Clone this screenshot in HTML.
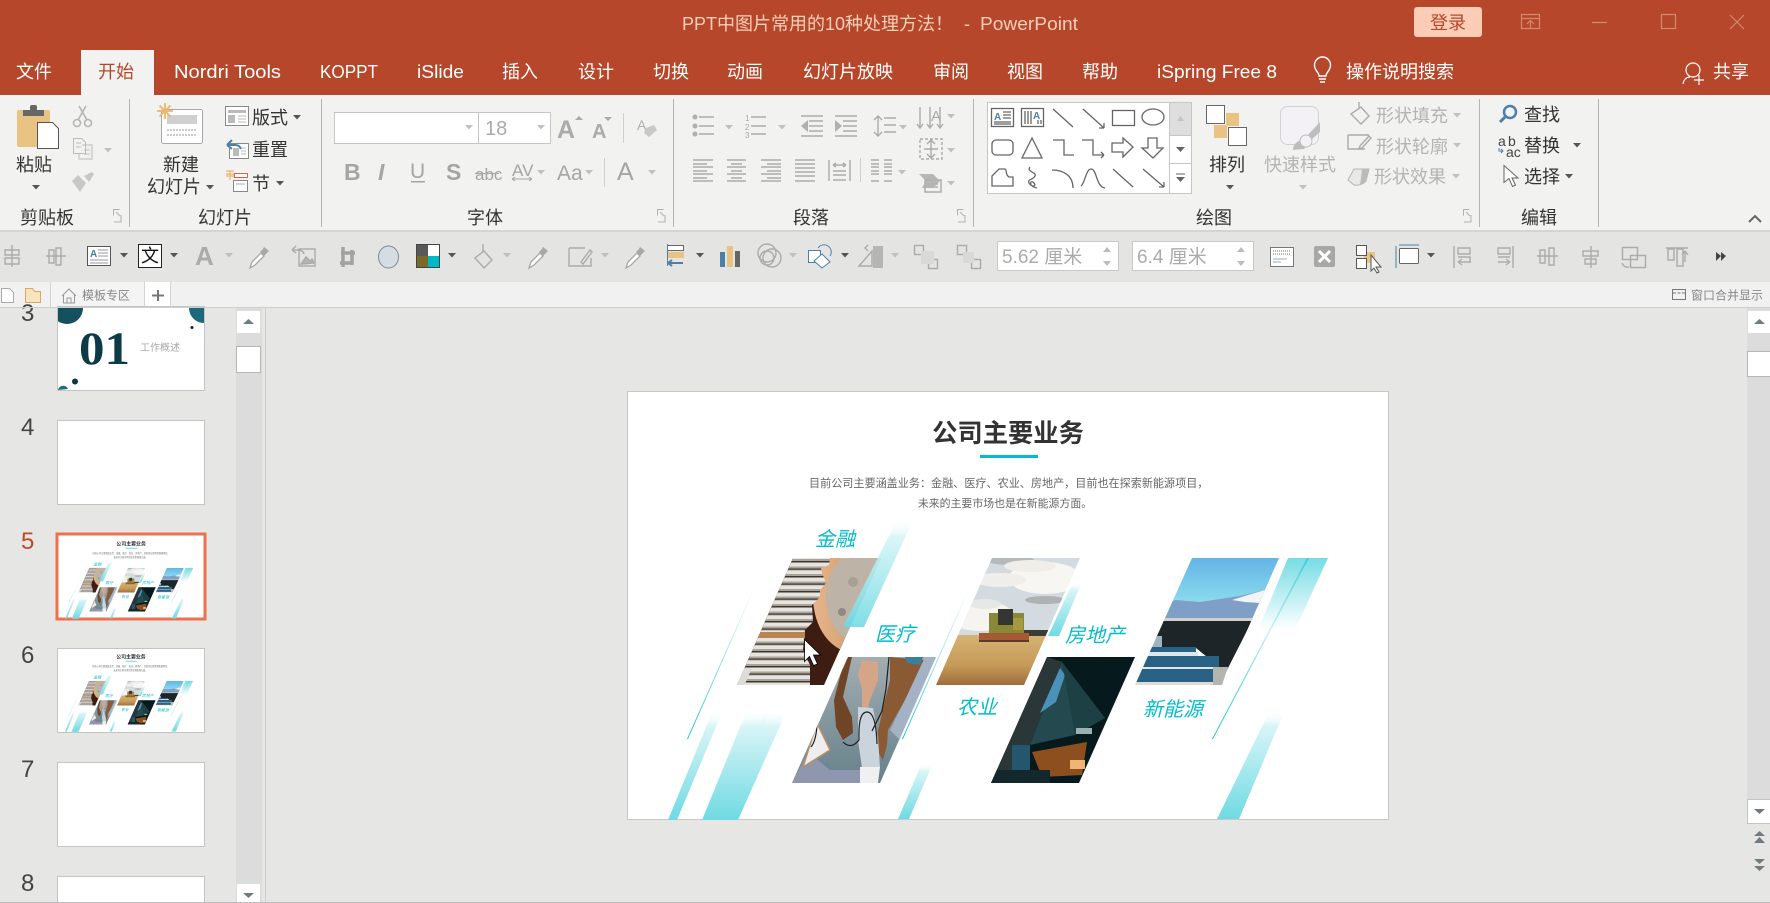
<!DOCTYPE html>
<html lang="zh-CN"><head><meta charset="utf-8"><title>PowerPoint</title>
<style>
html,body{margin:0;padding:0;width:1770px;height:903px;overflow:hidden;background:#e6e6e5}
svg{display:block}
text{font-family:"Liberation Sans","Noto Sans CJK SC",sans-serif}
.t{font-size:18px;fill:#fff}
.r{font-size:18px;fill:#333}
.d{font-size:18px;fill:#b4b4b4}
.g{font-size:18px;fill:#a9a9a9}
.l{font-size:20px;font-style:italic;fill:#05bccb}
.ic{fill:none;stroke:#ababab;stroke-width:1.4}
.dk{fill:none;stroke:#666;stroke-width:1.3}
</style></head><body>
<svg xmlns="http://www.w3.org/2000/svg" width="1770" height="903" viewBox="0 0 1770 903">
<defs>
<polygon id="a" points="-4,-2 4,-2 0,2.5" fill="#555"/>
<polygon id="b" points="-4,-2 4,-2 0,2.5" fill="#c0c0c0"/>
<linearGradient id="gu" x1="0" y1="0" x2="0" y2="1"><stop offset="0" stop-color="#fff" stop-opacity="0"/><stop offset=".15" stop-color="#d8f5f7"/><stop offset="1" stop-color="#6fdae3"/></linearGradient>
<linearGradient id="gd" x1="0" y1="0" x2="0" y2="1"><stop offset="0" stop-color="#76dce4"/><stop offset="1" stop-color="#fff"/></linearGradient>
<linearGradient id="gl" x1="0" y1="0" x2="0" y2="1"><stop offset="0" stop-color="#fff"/><stop offset="1" stop-color="#12bfcd"/></linearGradient>
<linearGradient id="gm" x1="0" y1="0" x2="0" y2="1"><stop offset="0" stop-color="#3fcbd6"/><stop offset=".4" stop-color="#c8f0f3"/><stop offset="1" stop-color="#12bfcd"/></linearGradient>
<linearGradient id="sky" x1="0" y1="0" x2="0" y2="1"><stop offset="0" stop-color="#62b2e5"/><stop offset="1" stop-color="#8fe0ee"/></linearGradient>
<linearGradient id="fld" x1="0" y1="0" x2="0" y2="1"><stop offset="0" stop-color="#d6b373"/><stop offset=".6" stop-color="#c69a58"/><stop offset="1" stop-color="#9d6e3e"/></linearGradient>
<linearGradient id="pl" x1="0" y1="0" x2="1" y2="0"><stop offset="0" stop-color="#e8b48c"/><stop offset="1" stop-color="#b88a50"/></linearGradient>
<linearGradient id="med" x1="0" y1="0" x2="0" y2="1"><stop offset="0" stop-color="#a4aeb2"/><stop offset="1" stop-color="#65808a"/></linearGradient>
<pattern id="coin" width="9" height="7.5" patternUnits="userSpaceOnUse"><rect width="9" height="7.5" fill="#a9a39a"/><rect y=".5" width="9" height="3.5" fill="#e6e4e0"/><rect y="6" width="9" height="1.2" fill="#3f352c"/></pattern>
<clipPath id="c1"><polygon points="793,558 881,558 824,685 737,685"/></clipPath>
<clipPath id="c2"><polygon points="848,657 936,657 880,783 792,783"/></clipPath>
<clipPath id="c3"><polygon points="992,558 1080,558 1024,685 936,685"/></clipPath>
<clipPath id="c4"><polygon points="1047,657 1135,657 1079,783 991,783"/></clipPath>
<clipPath id="c5"><polygon points="1192,558 1279,558 1223,685 1135,685"/></clipPath>
<clipPath id="th3"><rect x="58" y="308" width="146" height="82"/></clipPath>
<g id="dr"><path d="M2 23l2-6 9-9 3 3-9 9z" fill="#fff" stroke="#a8a8a8" stroke-width="1.3"/><path d="M12 7l3-3 1-2 5 4-2 2-3 3z" fill="#a8a8a8"/></g>
<g id="slide">
<g clip-path="url(#c1)"><rect x="735" y="556" width="150" height="130" fill="#3d1c12"/><ellipse cx="855" cy="597" rx="42" ry="56" fill="url(#pl)"/><ellipse cx="862" cy="597" rx="36" ry="47" fill="#bdb4a7"/><circle cx="853" cy="582" r="5" fill="#a8a096"/><circle cx="842" cy="612" r="4" fill="#8f8a85"/><polygon points="737,685 793,558 830,558 829,565 821,568 822,573 826,583 820,590 820,597 812,605 813,622 805,630 803,650 810,665 810,685" fill="url(#coin)"/><polygon points="735,668 752,668 744,686 735,686" fill="#dcdcda"/><rect x="755" y="632" width="50" height="6" fill="#b98552"/><polygon points="874,570 881,570 864,627 843,627 855,612" fill="#5cb8ec" opacity=".55"/></g>
<g clip-path="url(#c2)"><rect x="790" y="655" width="150" height="130" fill="url(#med)"/><polygon points="845,657 834,700 836,727 843,740 853,733 852,717 843,697 852,657" fill="#6f4526"/><polygon points="862,660 878,662 878,680 870,700 868,708 862,708 862,690 858,675" fill="#d4a687"/><polygon points="890,657 925,660 905,700 888,730 887,745 883,760 878,752 877,735 885,700 890,680" fill="#8a5a34"/><polygon points="925,657 936,657 900,740 890,730 905,700" fill="#a3b2c4"/><polygon points="858,707 873,708 878,737 880,768 862,768 858,740" fill="#c9d4dd"/><polygon points="860,767 880,767 878,783 860,783" fill="#f0f0f0"/><polygon points="792,783 860,783 860,770 830,770 808,752" fill="#8e97ad"/><polygon points="817,723 830,750 803,767" fill="#eee" stroke="#b98f68" stroke-width="1.5"/><polygon points="905,657 923,657 920,665 907,663" fill="#3a7f9e"/><path d="M843 742q8 8 16-2q-1-28 8-28 9 0 10 32M889 657l-3 32-4 22-10 20M817 725q-1 16-6 22" fill="none" stroke="#1d1d1d" stroke-width="1.2"/></g>
<g clip-path="url(#c3)"><rect x="930" y="556" width="155" height="80" fill="#d3dbe0"/><ellipse cx="1010" cy="560" rx="24" ry="5" fill="#b4babb"/><ellipse cx="1045" cy="578" rx="36" ry="16" fill="#f7f6f2"/><ellipse cx="1000" cy="580" rx="26" ry="7" fill="#f0eeea"/><ellipse cx="1030" cy="566" rx="26" ry="6" fill="#f0eee8"/><ellipse cx="1045" cy="600" rx="20" ry="4" fill="#aeb2b3"/><ellipse cx="980" cy="616" rx="34" ry="15" fill="#f6f4ee"/><ellipse cx="985" cy="604" rx="16" ry="5" fill="#e6e8e6"/><rect x="930" y="635" width="155" height="50" fill="url(#fld)"/><rect x="1020" y="630" width="40" height="6" fill="#3c3c34"/><rect x="989" y="613" width="35" height="20" fill="#8a8838"/><rect x="1013" y="618" width="10" height="12" fill="#a69a40"/><rect x="998" y="609" width="15" height="16" fill="#353631"/><rect x="979" y="633" width="50" height="7" fill="#a45a32"/><rect x="979" y="640" width="50" height="2" fill="#5a3a28"/></g>
<g clip-path="url(#c4)"><rect x="990" y="655" width="150" height="130" fill="#06191d"/><polygon points="1047,657 1062,662 1030,745 1015,780 991,783" fill="#2b3638"/><polygon points="1062,662 1030,745 1075,735 1105,718" fill="#24494e"/><polygon points="1060,668 1040,713 1056,702 1065,675" fill="#4a92b8"/><polygon points="1062,662 1105,718 1075,735" fill="#1c4044"/><polygon points="1032,752 1087,742 1082,775 1042,777" fill="#8d4f1d"/><rect x="1070" y="760" width="15" height="9" fill="#eeb574"/><rect x="1012" y="745" width="18" height="26" fill="#24566e"/><rect x="990" y="770" width="60" height="14" fill="#12282c"/><rect x="1076" y="728" width="16" height="6" fill="#9ab1b4"/></g>
<g clip-path="url(#c5)"><rect x="1130" y="556" width="152" height="52" fill="url(#sky)"/><polygon points="1160,608 1175,600 1200,602 1240,596 1265,590 1262,622 1160,622" fill="#7f9fc6"/><polygon points="1232,600 1248,595 1265,590 1260,603 1245,602" fill="#f2f5f8"/><rect x="1130" y="618" width="130" height="3" fill="#d0d0ce"/><polygon points="1158,621 1252,621 1226,672 1218,666 1196,648 1155,648" fill="#1d2528"/><rect x="1150" y="636" width="12" height="20" fill="#9fb4c0"/><rect x="1148" y="647" width="48" height="5" fill="#2a6285"/><rect x="1146" y="652" width="52" height="4" fill="#dfe6ea"/><rect x="1143" y="656" width="76" height="11" fill="#2a6285"/><rect x="1140" y="667" width="80" height="2" fill="#dfe6ea"/><rect x="1134" y="669" width="82" height="13" fill="#2a6285"/><rect x="1134" y="682" width="82" height="3" fill="#e0dcd4"/><polygon points="1213,667 1228,667 1222,685 1213,685" fill="#b5b5b0"/></g>
<polygon points="897,520 913,520 864,627 843,627" fill="url(#gu)" opacity=".88"/>
<polygon points="753,590 754,590 688,739 687,739" fill="url(#gl)"/>
<polygon points="713,710 723,710 677,820 668,820" fill="url(#gu)"/>
<polygon points="747,710 787,710 738,820 702,820" fill="url(#gu)"/>
<polygon points="766,710 770,710 728,820 717,820" fill="url(#gu)"/>
<polygon points="922,763 933,763 909,819 898,819" fill="url(#gu)"/>
<polygon points="968,590 969,590 903,739 902,739" fill="url(#gl)"/>
<polygon points="1073,582 1082,582 1059,636 1048,636" fill="url(#gu)"/>
<polygon points="1288,558 1328,558 1295,630 1258,630" fill="url(#gd)"/>
<polygon points="1307,558 1309,558 1213,739 1212,739" fill="url(#gm)"/>
<polygon points="1270,710 1285,710 1239,819 1217,819" fill="url(#gu)"/>
<text x="1008" y="442" font-size="25.300" font-weight="700" fill="#333" text-anchor="middle">公司主要业务</text>
<rect x="980" y="455" width="58" height="3" fill="#05bccb"/>
<text x="809" y="487" font-size="11.100" fill="#666">目前公司主要涵盖业务：金融、医疗、农业、房地产，目前也在探索新能源项目，</text>
<text x="1005" y="507" font-size="10.900" fill="#666" text-anchor="middle">未来的主要市场也是在新能源方面。</text>
<text class="l" x="815" y="546">金融</text>
<text class="l" x="875" y="641">医疗</text>
<text class="l" x="957" y="714">农业</text>
<text class="l" x="1065" y="642">房地产</text>
<text class="l" x="1143" y="716">新能源</text>
</g>
</defs>

<rect width="1770" height="903" fill="#e6e6e5"/>
<!-- title bar -->
<rect width="1770" height="95" fill="#b7472a"/>
<text x="682" y="30" font-size="18" fill="#f6cfba">PPT中图片常用的10种处理方法！</text>
<text x="964" y="30" font-size="18" fill="#f6cfba">-</text>
<text x="980" y="30" font-size="18" fill="#f6cfba" textLength="98" lengthAdjust="spacingAndGlyphs">PowerPoint</text>
<rect x="1414" y="7" width="68" height="30" rx="3" fill="#fbcdb7"/>
<text x="1448" y="29" font-size="18" fill="#b7472a" text-anchor="middle">登录</text>
<g fill="none" stroke="#d18a72" stroke-width="1.2"><rect x="1521.500" y="14.500" width="18" height="14"/><path d="M1521 18.500h19M1530.500 28v-7M1527 24l3.500-3.500 3.500 3.500M1592 22.500h15"/><rect x="1661.500" y="14.500" width="14" height="14"/><path d="M1730 15l14 14M1744 15l-14 14"/></g>
<!-- tabs -->
<rect x="81" y="50" width="73" height="45" fill="#f2f2f1"/>
<text class="t" x="16" y="78">文件</text>
<text x="98" y="78" font-size="18" fill="#b7472a">开始</text>
<text class="t" x="174" y="78" textLength="107" lengthAdjust="spacingAndGlyphs">Nordri Tools</text>
<text class="t" x="320" y="78" textLength="58" lengthAdjust="spacingAndGlyphs">KOPPT</text>
<text class="t" x="417" y="78" textLength="47" lengthAdjust="spacingAndGlyphs">iSlide</text>
<text class="t" x="502" y="78">插入</text>
<text class="t" x="578" y="78">设计</text>
<text class="t" x="653" y="78">切换</text>
<text class="t" x="727" y="78">动画</text>
<text class="t" x="803" y="78">幻灯片放映</text>
<text class="t" x="933" y="78">审阅</text>
<text class="t" x="1007" y="78">视图</text>
<text class="t" x="1082" y="78">帮助</text>
<text class="t" x="1157" y="78" textLength="120" lengthAdjust="spacingAndGlyphs">iSpring Free 8</text>
<path d="M1319 81h7M1320 84h5M1319 78c0-4-4.500-5-4.500-11a8 8 0 0 1 16 0c0 6-4.500 7-4.500 11z" fill="none" stroke="#fff" stroke-width="1.400" transform="translate(0 -2)"/>
<text class="t" x="1346" y="78">操作说明搜索</text>
<g fill="none" stroke="#fff" stroke-width="1.200"><circle cx="1693" cy="70" r="7"/><path d="M1683 84c1-5 4-7 7-7M1693 77h1M1699 75v10M1694 80h10"/></g>
<text class="t" x="1713" y="78">共享</text>

<!-- ribbon -->
<rect y="95" width="1770" height="136" fill="#f2f2f1"/>
<rect y="230" width="1770" height="2" fill="#d4d4d3"/>
<g fill="#b5b5b5"><rect x="129" y="99" width="1" height="128"/><rect x="321" y="99" width="1" height="128"/><rect x="673" y="99" width="1" height="128"/><rect x="973" y="99" width="1" height="128"/><rect x="1479" y="99" width="1" height="128"/><rect x="1598" y="99" width="1" height="128"/></g>
<text class="r" x="20" y="224">剪贴板</text><text class="r" x="198" y="224">幻灯片</text><text class="r" x="467" y="224">字体</text><text class="r" x="793" y="224">段落</text><text class="r" x="1196" y="224">绘图</text><text class="r" x="1521" y="224">编辑</text>
<g fill="none" stroke="#b0b0b0"><path d="M113.500 215.500v-6h6M114 222h7v-7M116 212l4 4"/><path d="M657.500 215.500v-6h6M658 222h7v-7M660 212l4 4"/><path d="M957.500 215.500v-6h6M958 222h7v-7M960 212l4 4"/><path d="M1463.500 215.500v-6h6M1464 222h7v-7M1466 212l4 4"/></g>
<!-- clipboard -->
<rect x="17" y="110" width="33" height="37" rx="2" fill="#e9c384"/><rect x="23" y="110" width="21" height="6" fill="#666"/><rect x="30" y="105" width="7" height="6" rx="2" fill="#666"/>
<path d="M37.500 122.500h15l6 6v20h-21z" fill="#fff" stroke="#555"/>
<text class="r" x="16" y="171">粘贴</text><use href="#a" x="36" y="187"/>
<g fill="none" stroke="#b4b4b4" stroke-width="1.600"><circle cx="77" cy="123" r="3.500"/><circle cx="88" cy="123" r="3.500"/><path d="M78 120l8-14M87 120l-8-14"/></g>
<path d="M73.500 138.500h8l4 4v11h-12zM82 145h10v14h-13v-5M76 143h5M76 147h5M84 150h6M84 154h6" fill="none" stroke="#bcbcbc"/><use href="#b" x="108" y="150"/>
<path d="M72 181l6-6 8 8-6 9zM84 176l8-4 2 2-5 8z" fill="#c8c8c8"/>
<!-- new slide -->
<rect x="161.500" y="109.500" width="41" height="34" rx="2" fill="#fff" stroke="#a8a8a8"/><rect x="167" y="115" width="30" height="9" fill="#d0d0d0"/><path d="M167 130h30M167 135h30" stroke="#999" stroke-dasharray="2 1"/>
<path d="M165 103v16M157 111h16M159.500 105.500l11 11M170.500 105.500l-11 11" stroke="#eeb56a" stroke-width="1.800"/>
<text class="r" x="163" y="171">新建</text><text class="r" x="147" y="193">幻灯片</text><use href="#a" x="210" y="187"/>
<rect x="225.500" y="106.500" width="23" height="19" fill="#fff" stroke="#888"/><path d="M228 110h18v3h-18zM228 115h7v8h-7z" fill="#bbb"/><path d="M238 116h8M238 119h8M238 122h8" stroke="#bbb"/>
<text class="r" x="252" y="124">版式</text><use href="#a" x="297" y="117"/>
<rect x="229.500" y="143.500" width="19" height="15" fill="#fff" stroke="#888"/><path d="M233 148h6v8h-6z" fill="#bbb"/><path d="M241 148h5M241 151h5M241 154h5" stroke="#bbb"/><path d="M227 145l5-5M227 145l5 4M227 145h8c4 0 5 2 6 4" fill="none" stroke="#4d7fa8" stroke-width="2"/>
<text class="r" x="252" y="156">重置</text>
<path d="M226 171h8M226 176h8M230 171v9M226 174l8 0" stroke="#eeb56a" stroke-width="1.200"/><rect x="234.500" y="173.500" width="13" height="4" fill="#fff" stroke="#d9644a"/><rect x="233.500" y="180.500" width="14" height="11" fill="#fff" stroke="#888"/><path d="M236 184h9" stroke="#aaa"/>
<text class="r" x="252" y="190">节</text><use href="#a" x="280" y="183"/>
<!-- font -->
<rect x="334.500" y="112.500" width="144" height="31" fill="#fff" stroke="#c6c6c6"/><rect x="478.500" y="112.500" width="72" height="31" fill="#fff" stroke="#c6c6c6"/>
<use href="#b" x="469" y="127"/><use href="#b" x="541" y="127"/>
<text x="485" y="135" font-size="20" fill="#ababab">18</text>
<text x="557" y="138" font-size="25" font-weight="700" fill="#ababab">A</text><polygon points="575,120 579,116 583,120" fill="#aaa"/>
<text x="592" y="138" font-size="20" font-weight="700" fill="#ababab">A</text><polygon points="604,117 612,117 608,121" fill="#aaa"/>
<rect x="623" y="113" width="1" height="30" fill="#d0d0d0"/>
<text x="637" y="130" font-size="14" fill="#b0b0b0">A</text><path d="M646 128l8-3 3 5-8 7-5-4z" fill="#c8c8c8"/>
<text x="344" y="180" font-size="23" font-weight="700" fill="#a5a5a5">B</text>
<text x="378" y="180" font-size="23" font-style="italic" font-weight="700" fill="#a5a5a5">I</text>
<text x="410" y="178" font-size="21" fill="#a5a5a5">U</text><rect x="411" y="181" width="14" height="1.500" fill="#a5a5a5"/>
<text x="446" y="180" font-size="23" font-weight="700" fill="#a5a5a5">S</text>
<text x="475" y="180" font-size="17" fill="#a5a5a5">abc</text><rect x="475" y="173" width="24" height="1" fill="#a5a5a5"/>
<text x="512" y="176" font-size="17" fill="#a5a5a5">AV</text><path d="M512 179h20M512 179l3-2M512 179l3 2M532 179l-3-2M532 179l-3 2" stroke="#a5a5a5" fill="none"/><use href="#b" x="541" y="172"/>
<text x="557" y="180" font-size="21" fill="#a5a5a5">Aa</text><use href="#b" x="589" y="172"/><rect x="604" y="158" width="1" height="29" fill="#d0d0d0"/>
<text x="617" y="180" font-size="25" fill="#a5a5a5">A</text><use href="#b" x="652" y="172"/>
<!-- paragraph -->
<g class="ic"><path d="M699 117h15M699 126h15M699 134h15"/><path d="M751 117h15M751 126h15M751 134h15"/><path d="M801 116h22M809 121h14M809 126h14M809 131h14M801 136h22M835 116h22M843 121h14M843 126h14M843 131h14M835 136h22"/><path d="M884 118h12M884 125h12M884 132h12M878 116v20M874 120l4-4 4 4M874 132l4 4 4-4"/><path d="M920 107v21M930 107v21M940 107v21M917 124l3 4 3-4M927 124l3 4 3-4M937 124l3 4 3-4"/><rect x="920" y="139" width="22" height="20" stroke-dasharray="3 2"/><path d="M931 139v18M927 144l4-4 4 4M927 154l4 4 4-4M924 149h14"/>
<path d="M693 160h20M693 167h20M693 174h20M693 181h20M693 164h14M693 171h14M693 178h14"/>
<path d="M727 160h19M727 167h19M727 174h19M727 181h19M731 164h11M731 171h11M731 178h11"/>
<path d="M761 160h20M761 167h20M761 174h20M761 181h20M767 164h14M767 171h14M767 178h14"/>
<path d="M795 160h20M795 164h20M795 168h20M795 172h20M795 176h20M795 181h20"/><path d="M829 160v21M850 160v21M833 165h13M833 165l3-2M833 165l3 2M846 165l-3-2M846 165l-3 2M833 171h13M833 175h13M833 180h13"/>
<path d="M871 160h8M871 167h8M871 174h8M871 181h8M884 160h8M884 167h8M884 174h8M884 181h8M871 164h8M871 171h8M884 164h8M884 171h8"/>
<path d="M925 180h16v12h-16zM928 184h10M928 187h10"/></g>
<g fill="#b0b0b0"><circle cx="695" cy="117" r="2.500"/><circle cx="695" cy="126" r="2.500"/><circle cx="695" cy="134" r="2.500"/><polygon points="801,126 808,120 808,132"/><polygon points="842,126 835,120 835,132"/><polygon points="919,174 933,174 940,181 933,188 922,188 926,181" opacity=".9"/><rect x="860" y="158" width="1" height="24" fill="#d0d0d0"/></g>
<g font-size="8" fill="#aaa"><text x="745" y="121">1</text><text x="745" y="130">2</text><text x="745" y="138">3</text></g>
<text x="931" y="121" font-size="15" fill="#aaa">A</text>
<use href="#b" x="729" y="127"/><use href="#b" x="782" y="127"/><use href="#b" x="903" y="127"/><use href="#b" x="951" y="116"/><use href="#b" x="951" y="150"/><use href="#b" x="951" y="183"/><use href="#b" x="902" y="172"/>
<!-- gallery -->
<rect x="987.500" y="102.500" width="204" height="91" fill="#fff" stroke="#c6c6c6"/>
<rect x="1170" y="103" width="21" height="32" fill="#dedede"/><rect x="1169" y="102" width="1" height="92" fill="#c6c6c6"/><rect x="1169" y="135" width="23" height="1" fill="#c6c6c6"/><rect x="1169" y="163" width="23" height="1" fill="#c6c6c6"/>
<polygon points="1177,121 1184,121 1180.500,116" fill="#c4c4c4"/><polygon points="1176,147 1185,147 1180.500,152" fill="#666"/><path d="M1176 174h9" stroke="#666"/><polygon points="1176,177 1185,177 1180.500,182" fill="#666"/>
<g class="dk"><rect x="991.500" y="108.500" width="22" height="18"/><path d="M1003 112h8M1003 115h8M1003 118h8M994 122h17M994 124h17"/><rect x="1021.500" y="108.500" width="22" height="18"/><path d="M1025 111v13M1028 111v13M1031 111v13M1041 120v4M1038 120v4"/><path d="M1053 109l20 18M1083 109l21 19M1104 128v-5M1104 128h-5"/><rect x="1112.500" y="110.500" width="22" height="15"/><ellipse cx="1153" cy="117" rx="11" ry="8"/>
<rect x="992" y="140" width="21" height="15" rx="4"/><path d="M1032 138l-10 20h20zM1053 140h11v15h10M1082 140h11v15h11M1104 155l-3-3M1104 155l-3 3M1112 143h11v-5l10 9-10 10v-5h-11zM1148 138h9v10h6l-10 10-11-10h6z"/>
<path d="M992 176l7-7h6c2 0 0 6 4 8l4 0v9h-21zM1030 167c-4 5 7 5 5 9s-8 3-6 7 8 4 5 0-7 3 3 5M1052 170c12 0 21 6 21 18M1081 186c4-3 5-17 10-17 6 0 5 18 14 19M1113 169l20 18M1143 169l21 18M1164 187v-5M1164 187h-5"/></g>
<text x="994" y="120" font-size="10" font-weight="700" fill="#4b81ad">A</text><text x="1033" y="119" font-size="10" font-weight="700" fill="#4b81ad">A</text>
<!-- arrange -->
<rect x="1226" y="113" width="13" height="13" fill="#e9c384"/><rect x="1214" y="125" width="13" height="13" fill="#e9c384"/>
<rect x="1206.500" y="105.500" width="18" height="18" fill="#fff" stroke="#666"/><rect x="1228.500" y="127.500" width="18" height="18" fill="#fff" stroke="#666"/>
<text class="r" x="1209" y="171">排列</text><use href="#a" x="1230" y="187"/>
<rect x="1280.500" y="106.500" width="38" height="38" rx="7" fill="#f4f1f6" stroke="#d2d2d2"/><path d="M1293 150c0-6 5-10 11-10l3 5-3 4zM1306 137l14-15v10l-10 9z" fill="#bdbdbd"/><circle cx="1306" cy="141" r="6" fill="#f4f1f6" stroke="#bdbdbd"/>
<text class="d" x="1264" y="171">快速样式</text><use href="#b" x="1303" y="187"/>
<g class="ic"><path d="M1351 114l10-7 8 9-8 8zM1359 102v7"/><path d="M1348 135h20v-1M1348 135v14h17M1360 146l9-10 2 2-9 10-3 1z"/></g>
<path d="M1348 180l6-11h15l-3 12q-4 5-12 4z" fill="#e9e9e9" stroke="#b5b5b5"/><path d="M1362 169l7 0-3 12-6 4z" fill="#bbb"/>
<text class="d" x="1376" y="122">形状填充</text><text class="d" x="1376" y="153">形状轮廓</text><text class="d" x="1374" y="183">形状效果</text>
<use href="#b" x="1457" y="115"/><use href="#b" x="1457" y="145"/><use href="#b" x="1456" y="176"/>
<!-- edit -->
<circle cx="1510" cy="112" r="6" fill="none" stroke="#4d7fa8" stroke-width="2.500"/><path d="M1505 117l-5 5" stroke="#4d7fa8" stroke-width="3"/>
<text x="1498" y="146" font-size="14" fill="#444">a</text><text x="1508" y="146" font-size="14" fill="#444">b</text><text x="1506" y="157" font-size="14" fill="#444">ac</text><path d="M1499 148v3h4M1501 149l2 2-2 2" fill="none" stroke="#4d7fa8"/>
<path d="M1504 165.500v17l5-4 3.500 8 3-1.500-3.500-7h6z" fill="#fff" stroke="#666"/>
<text class="r" x="1524" y="121">查找</text><text class="r" x="1524" y="152">替换</text><text class="r" x="1524" y="183">选择</text>
<use href="#a" x="1577" y="145"/><use href="#a" x="1569" y="176"/>
<path d="M1749 222l6-6 6 6" fill="none" stroke="#666" stroke-width="2"/>

<!-- toolbar -->
<rect y="232" width="1770" height="50" fill="#e4e4e3"/>
<g class="ic"><path d="M12 245v22M5 250h14v5H5zM5 258h14v6H5z"/><path d="M46 256h20M49 250h5v13h-5zM56 248h5v17h-5z"/>
<path d="M292 250l4-4M292 250l4 3M292 250h6q5 0 6 4"/><rect x="299" y="249" width="16" height="17"/><path d="M301 264l5-7 4 4 2-2 2 4z" fill="#b5b5b5"/>
<path d="M475 258l9-7 8 9-8 8zM483 244v8"/><path d="M569 248h16M569 248v18h22v-8M581 262l9-12 2 2-9 12z"/>
<circle cx="767" cy="253" r="9"/><circle cx="772" cy="258" r="9"/><circle cx="767" cy="258" r="7"/>
<path d="M859 266l13-15v15zM868 245l-3 3 3 3"/><rect x="914.500" y="245.500" width="9" height="9"/><rect x="928.500" y="259.500" width="9" height="9"/><rect x="957.500" y="245.500" width="9" height="9"/><rect x="971.500" y="259.500" width="9" height="9"/>
<path d="M1454 246v22M1458 248h12v6h-12zM1458 257h12v5M1471 262h-12M1458 262l4-3M1458 262l4 3"/><path d="M1513 246v22M1498 248h12v6h-12zM1498 257h12M1498 262h12M1510 262l-4-3M1510 262l-4 3"/><path d="M1537 256h21M1540 250h5v13h-5zM1549 248h5v17h-5z"/><path d="M1591 246v22M1583 251h15v5h-15zM1585 259h11v5h-11z"/>
<rect x="1622.500" y="247.500" width="15" height="12"/><rect x="1630.500" y="255.500" width="15" height="12"/><path d="M1622 263q2 5 7 4"/><path d="M1666 248h22M1668 249h6v11h-6zM1677 249h6v17h-6zM1685 262v-10M1682 255l3-4 3 4"/></g>
<polygon points="873,246 883,246 883,268 873,268" fill="#b5b5b5"/><rect x="921" y="251" width="13" height="13" fill="#d9d9d9"/><rect x="963" y="252" width="11" height="11" fill="#d9d9d9"/>
<rect x="87.500" y="246.500" width="23" height="19" fill="#fff" stroke="#555"/><text x="90" y="257" font-size="10" font-weight="700" fill="#3f7cac">A</text><path d="M98 250h10M98 253h10M98 256h10M90 260h18M90 263h18" stroke="#777" stroke-width=".8"/>
<use href="#a" x="124" y="255"/>
<rect x="138.500" y="244.500" width="23" height="23" fill="#fff" stroke="#222"/><text x="141" y="262" font-size="18" fill="#111">文</text><use href="#a" x="174" y="255"/>
<text x="195" y="265" font-size="26" font-weight="700" fill="#ababab">A</text><use href="#b" x="229" y="255"/>
<use href="#dr" x="248" y="245"/><use href="#dr" x="527" y="245"/><use href="#dr" x="624" y="245"/>
<path d="M341 253h14M343 247v20M340 263h12M352 250v15" fill="none" stroke="#a2a2a2" stroke-width="3.500"/>
<ellipse cx="388.500" cy="257" rx="10" ry="11" fill="#d5dde3" stroke="#7a8a98"/>
<rect x="416" y="244" width="12" height="12" fill="#595959"/><rect x="428" y="244" width="12" height="12" fill="#fff"/><rect x="416" y="256" width="12" height="12" fill="#7a6a28"/><rect x="428" y="256" width="12" height="12" fill="#00b9c6"/><rect x="416.500" y="244.500" width="23" height="23" fill="none" stroke="#444"/><use href="#a" x="452" y="255"/>
<use href="#b" x="507" y="255"/><use href="#b" x="605" y="255"/>
<rect x="667.500" y="245.500" width="16" height="5" fill="#fff" stroke="#666"/><rect x="667" y="252" width="17" height="6" fill="#e9c384"/><path d="M683 263h-15M668 263l4-3M668 263l4 3" fill="none" stroke="#4d7fa8" stroke-width="2"/><rect x="667" y="244" width="1" height="22" fill="#4d7fa8"/><use href="#a" x="700" y="255"/>
<rect x="720" y="252" width="5" height="15" fill="#4d7fa8"/><rect x="727" y="246" width="6" height="21" fill="#e9c384"/><rect x="735" y="251" width="5" height="16" fill="#666"/>
<use href="#b" x="793" y="255"/>
<rect x="808.500" y="250.500" width="12" height="12" fill="#fff" stroke="#4d7fa8"/><polygon points="822,254 830,262 822,268 814,261" fill="#fff" stroke="#4d7fa8"/><path d="M818 248a7 7 0 0 1 12 8" fill="none" stroke="#4d7fa8"/><use href="#a" x="845" y="255"/>
<use href="#b" x="895" y="255"/>
<rect x="997.500" y="241.500" width="121" height="29" fill="#fff" stroke="#c8c8c8"/><rect x="1132.500" y="241.500" width="121" height="29" fill="#fff" stroke="#c8c8c8"/>
<text x="1002" y="263" font-size="19" fill="#ababab">5.62 厘米</text><text x="1137" y="263" font-size="19" fill="#ababab">6.4 厘米</text>
<g fill="#bdbdbd"><polygon points="1103,252 1111,252 1107,247"/><polygon points="1103,261 1111,261 1107,266"/><polygon points="1237,252 1245,252 1241,247"/><polygon points="1237,261 1245,261 1241,266"/></g>
<rect x="1270.500" y="247.500" width="23" height="19" fill="#fff" stroke="#777"/><path d="M1273 251h18M1273 254h18" stroke="#777" stroke-dasharray="1 1"/><path d="M1273 259h14M1273 262h8" stroke="#9ab"/>
<rect x="1314" y="246" width="21" height="21" rx="2" fill="#a8a8a8"/><path d="M1319 251l11 11M1330 251l-11 11" stroke="#fff" stroke-width="3"/>
<rect x="1364" y="252" width="11" height="11" fill="#e9c384"/><rect x="1356.500" y="245.500" width="10" height="10" fill="#fff" stroke="#555"/><rect x="1356.500" y="258.500" width="10" height="10" fill="#fff" stroke="#555"/><path d="M1371 255v16l3-3 3 5 2-1-3-5h5z" fill="#fff" stroke="#555"/>
<rect x="1399.500" y="248.500" width="19" height="15" rx="1" fill="#fff" stroke="#666"/><path d="M1399 245h20M1396 246v22" stroke="#4d7fa8"/><use href="#a" x="1431" y="255"/>
<polygon points="1716,252 1721,256 1716,261" fill="#444"/><polygon points="1721,252 1726,256 1721,261" fill="#444"/>

<!-- tab strip -->
<rect y="282" width="1770" height="26" fill="#f1f1f1"/>
<rect x="50" y="282" width="94" height="25" fill="#f4f4f4"/>
<rect x="144" y="282" width="27" height="25" fill="#fff"/>
<rect x="50" y="282" width="1" height="25" fill="#d4d4d4"/><rect x="144" y="282" width="1" height="25" fill="#d4d4d4"/><rect x="170" y="282" width="1" height="25" fill="#d4d4d4"/>
<path d="M1.500 288.500h8l4 4v10h-12z" fill="#fff" stroke="#aaa"/><path d="M25.500 288.500h7l2 3h6v11h-15z" fill="#f7e4bd" stroke="#d8a862"/>
<path d="M62 296l7-7 7 7M63.500 295v8h11v-8M67 303v-5h4v5" fill="none" stroke="#999"/>
<text x="82" y="299.500" font-size="12" fill="#888">模板专区</text>
<path d="M158 290v11M152 295.500h12" stroke="#777" stroke-width="2"/>
<path d="M1672.500 289.500h13v10h-13zM1673 293h3M1677.500 293h3M1682 293h3" fill="none" stroke="#777"/>
<text x="1691" y="299.500" font-size="12" fill="#888">窗口合并显示</text>

<!-- left pane -->
<rect x="236" y="308" width="26" height="595" fill="#dcdcdc"/><rect x="265" y="308" width="1" height="595" fill="#cfcfcf"/>
<rect x="236.500" y="310.500" width="24" height="23" fill="#fff" stroke="#ddd"/><polygon points="243,324 254,324 248.500,319" fill="#707b80"/>
<rect x="236.500" y="346.500" width="24" height="26" fill="#fff" stroke="#b5b5b5"/>
<rect x="236.500" y="883.500" width="24" height="20" fill="#fff" stroke="#ddd"/><polygon points="243,893 254,893 248.500,898" fill="#707b80"/>
<!-- thumbs -->
<g fill="#fff" stroke="#c4c4c4"><rect x="57.500" y="306.500" width="147" height="84"/><rect x="57.500" y="420.500" width="147" height="84"/><rect x="57.500" y="648.500" width="147" height="84"/><rect x="57.500" y="762.500" width="147" height="84"/><rect x="57.500" y="876.500" width="147" height="40"/></g>
<rect x="57" y="534" width="148" height="85" fill="#fff" stroke="#f0704e" stroke-width="3"/>
<g clip-path="url(#th3)"><circle cx="67" cy="308" r="16" fill="#15505f"/><circle cx="204" cy="308" r="15" fill="#1a6a7c"/><circle cx="192" cy="327.500" r="1.500" fill="#123"/><circle cx="75" cy="381.500" r="3" fill="#123340"/><path d="M58 390c1-5 8-6 10-1z" fill="#1b6f80"/></g>
<text x="79" y="364" font-size="47" font-weight="700" fill="#0c3a46" style="font-family:'Liberation Serif',serif" textLength="51" lengthAdjust="spacingAndGlyphs">01</text>
<text x="140" y="351" font-size="10" fill="#aaa">工作概述</text>
<g transform="translate(-64.600,459.500) scale(.1942)"><use href="#slide"/></g>
<g transform="translate(-64.800,572.500) scale(.1942)"><use href="#slide"/></g>
<g font-size="24" fill="#444"><text x="21" y="321">3</text><text x="21" y="435">4</text><text x="21" y="549" fill="#c0492a">5</text><text x="21" y="663">6</text><text x="21" y="777">7</text><text x="21" y="891">8</text></g>
<rect x="0" y="307" width="1770" height="1" fill="#cfcfcf"/>

<!-- slide -->
<rect x="627.500" y="391.500" width="761" height="428" fill="#fff" stroke="#c8c8c8"/>
<use href="#slide"/>
<path d="M804.500 639.500v22l5-5 4 9 4-1.500-4-9h7z" fill="#fff" stroke="#000" stroke-width=".8"/>

<!-- right scrollbar -->
<rect x="1747" y="308" width="23" height="516" fill="#dcdcdc"/>
<rect x="1747.500" y="310.500" width="23" height="23" fill="#fff" stroke="#ddd"/><polygon points="1754,324 1765,324 1759.500,319" fill="#707b80"/>
<rect x="1747.500" y="351.500" width="23" height="25" fill="#fff" stroke="#b5b5b5"/>
<rect x="1747.500" y="799.500" width="23" height="24" fill="#fff" stroke="#c4c4c4"/><polygon points="1754,809 1765,809 1759.500,814" fill="#707b80"/>
<g fill="#707b80"><polygon points="1754,836 1765,836 1759.500,831"/><polygon points="1754,843 1765,843 1759.500,837"/><polygon points="1754,859 1765,859 1759.500,864"/><polygon points="1754,866 1765,866 1759.500,871"/></g>
<rect y="902" width="1770" height="1" fill="#bcbcbc"/>
</svg>
</body></html>
